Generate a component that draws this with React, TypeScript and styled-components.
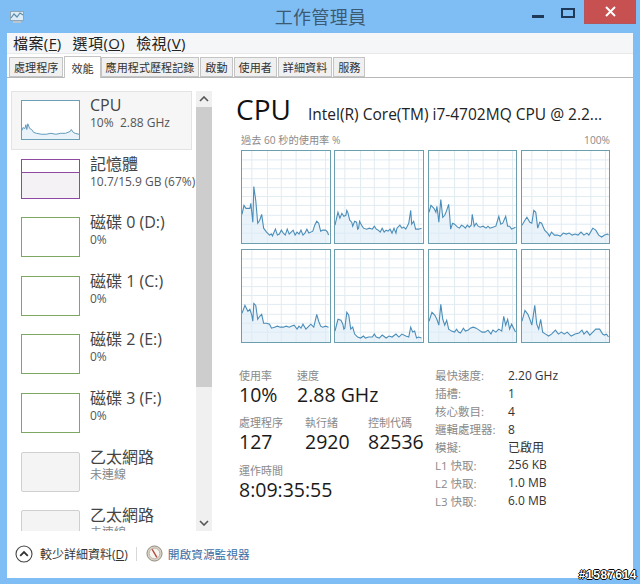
import React from 'react'
import styled, { createGlobalStyle } from 'styled-components'

const FONT = `"Open Sans", "Noto Sans CJK TC", sans-serif`

const cpuGraphs = [
  '0,64 2,55 4,58 6,58 8,58 9,53 11,72 12,36 14,50 16,73 18,70 20,64 22,78 25,82 28,85 30,84 31,86 34,79 36,85 38,84 40,80 42,83 44,85 46,79 48,84 50,82 52,80 54,85 56,82 58,84 60,80 62,85 64,83 66,79 68,83 70,82 72,81 74,75 76,71 78,73 80,81 82,80 85,80 87,82 88,85',
  '0,75 3,62 5,68 7,63 9,66 11,65 12,60 13,62 15,70 17,72 18,76 20,71 22,72 23,79 24,78 25,71 27,75 29,78 32,79 35,78 38,79 40,76 42,79 44,80 46,82 48,78 50,82 52,80 54,81 56,79 58,83 60,78 62,83 63,78 66,75 68,78 70,77 72,79 75,73 77,60 78,74 80,71 82,79 85,79 88,78',
  '0,62 2,55 5,58 7,62 8,56 9,63 10,72 12,49 14,67 16,65 18,60 20,54 21,65 22,79 24,73 26,74 29,77 31,78 33,75 35,76 37,78 39,75 41,77 43,75 44,64 46,76 48,73 50,76 52,77 55,76 58,78 60,76 62,78 65,77 68,76 71,66 73,74 75,73 78,66 80,76 82,76 84,79 88,77',
  '0,75 3,70 5,67 8,72 10,73 12,60 14,62 16,78 18,72 20,73 23,80 26,83 28,86 30,82 33,85 36,85 39,86 42,83 45,84 48,83 51,85 54,84 57,85 60,82 63,85 66,83 68,85 72,78 75,80 78,85 81,87 84,85 87,84 88,85',
  '0,64 3,56 6,62 8,60 10,66 11,72 12,54 14,56 16,70 18,67 20,65 22,74 25,74 28,75 30,79 33,78 36,77 39,78 42,78 45,77 48,78 50,77 53,76 56,80 58,77 60,79 62,75 65,80 68,77 70,75 73,78 76,65 78,72 80,77 82,78 85,77 88,78',
  '0,82 3,70 6,71 8,75 9,80 10,79 12,63 14,66 16,80 18,78 20,85 23,88 26,89 29,87 31,89 34,88 38,88 40,85 42,88 45,89 48,86 52,89 55,87 58,88 62,85 65,88 68,85 72,87 75,88 77,78 79,83 81,82 83,89 85,88 88,89',
  '0,72 3,63 6,66 8,70 10,76 12,55 14,70 16,76 18,71 20,80 23,82 26,83 28,80 30,83 32,84 35,79 37,82 40,81 42,79 45,78 48,79 51,81 54,83 57,83 60,81 63,85 65,81 68,83 71,80 74,82 76,67 78,76 80,70 82,80 84,75 88,83',
  '0,72 3,61 6,65 8,70 10,76 13,56 15,75 17,80 19,70 21,83 24,85 27,87 30,85 34,81 37,85 40,83 43,85 46,83 50,87 54,85 58,84 61,81 63,85 66,82 69,86 72,83 75,80 79,80 82,85 84,86 86,85 88,88',
]

const cpuThumb = '0,31 1,28 3,29 4,25 5,30 6,24 8,29 10,30 12,33 15,34 20,35 25,35 30,34 35,35 40,34 45,34 50,32 51,30 53,33 55,34 59,35'

const horizontalGrid = [9, 18, 28, 37, 46, 55, 65, 74, 83]
const verticalGrid = [10, 26, 40, 55, 70, 85]

const sideItems = [
  { name: 'CPU', sub: '10%  2.88 GHz', kind: 'cpu', selected: true },
  { name: '記憶體', sub: '10.7/15.9 GB (67%)', kind: 'memory' },
  { name: '磁碟 0 (D:)', sub: '0%', kind: 'disk' },
  { name: '磁碟 1 (C:)', sub: '0%', kind: 'disk' },
  { name: '磁碟 2 (E:)', sub: '0%', kind: 'disk' },
  { name: '磁碟 3 (F:)', sub: '0%', kind: 'disk' },
  { name: '乙太網路', sub: '未連線', kind: 'net', muted: true },
  { name: '乙太網路', sub: '未連線', kind: 'net', muted: true },
]

const specs = [
  ['最快速度:', '2.20 GHz'],
  ['插槽:', '1'],
  ['核心數目:', '4'],
  ['邏輯處理器:', '8'],
  ['模擬:', '已啟用'],
  ['L1 快取:', '256 KB'],
  ['L2 快取:', '1.0 MB'],
  ['L3 快取:', '6.0 MB'],
]

const App = () => {
  return (
    <Window>
      <GlobalStyle />
      <TitleBar>
        <AppIcon viewBox="0 0 16 16">
          <rect x="1.5" y="2.5" width="13" height="9" fill="#dcecf8" stroke="#8fa7b5" />
          <polyline points="2,9 5,5 8,8 11,4 14,6" fill="none" stroke="#5f8ea8" strokeWidth="1.2" />
          <rect x="4" y="12" width="8" height="2" fill="#b9c6cf" />
        </AppIcon>
        <Title>工作管理員</Title>
        <MinimizeButton />
        <MaximizeButton />
        <CloseButton>
          <svg width="11" height="11" viewBox="0 0 11 11">
            <path d="M1 1 L10 10 M10 1 L1 10" stroke="#fff" strokeWidth="2" />
          </svg>
        </CloseButton>
      </TitleBar>
      <Client>
        <MenuBar>
          <MenuItem>檔案(<u>F</u>)</MenuItem>
          <MenuItem>選項(<u>O</u>)</MenuItem>
          <MenuItem>檢視(<u>V</u>)</MenuItem>
        </MenuBar>
        <Tabs>
          <Tab>處理程序</Tab>
          <Tab $active>效能</Tab>
          <Tab>應用程式歷程記錄</Tab>
          <Tab>啟動</Tab>
          <Tab>使用者</Tab>
          <Tab>詳細資料</Tab>
          <Tab>服務</Tab>
        </Tabs>
        <Body>
          <SideColumn>
            <SideList>
              {sideItems.map((item, i) => (
                <SideItem key={i} $selected={item.selected}>
                  <Thumb $kind={item.kind}>
                    {item.kind === 'cpu' && (
                      <ThumbSvg viewBox="0 0 59 40" preserveAspectRatio="none">
                        <polygon points={`${cpuThumb} 59,40 0,40`} fill="#eaf3f9" />
                        <polyline points={cpuThumb} fill="none" stroke="#5b97bb" strokeWidth="1" />
                      </ThumbSvg>
                    )}
                    {item.kind === 'memory' && <MemoryFill />}
                  </Thumb>
                  <SideText>
                    <SideName>{item.name}</SideName>
                    <SideSub $muted={item.muted}>{item.sub}</SideSub>
                  </SideText>
                </SideItem>
              ))}
            </SideList>
            <ScrollBar>
              <ScrollArrow>
                <svg width="10" height="6" viewBox="0 0 10 6">
                  <path d="M1 5 L5 1 L9 5" fill="none" stroke="#555" strokeWidth="1.6" />
                </svg>
              </ScrollArrow>
              <ScrollThumb />
              <ScrollTrack />
              <ScrollArrow>
                <svg width="10" height="6" viewBox="0 0 10 6">
                  <path d="M1 1 L5 5 L9 1" fill="none" stroke="#555" strokeWidth="1.6" />
                </svg>
              </ScrollArrow>
            </ScrollBar>
          </SideColumn>
          <Main>
            <Heading>
              <HeadingTitle>CPU</HeadingTitle>
              <HeadingModel>Intel(R) Core(TM) i7-4702MQ CPU @ 2.2...</HeadingModel>
            </Heading>
            <CaptionRow>
              <span>過去 60 秒的使用率 %</span>
              <span>100%</span>
            </CaptionRow>
            <GraphGrid>
              {cpuGraphs.map((points, i) => (
                <Graph key={i} viewBox="0 0 89 93" preserveAspectRatio="none">
                  {horizontalGrid.map((y) => (
                    <line key={y} x1="0" x2="89" y1={y} y2={y} stroke="#e0ebf2" strokeWidth="1" />
                  ))}
                  {verticalGrid.map((x) => (
                    <line key={x} x1={x} x2={x} y1="0" y2="93" stroke="#e0ebf2" strokeWidth="1" />
                  ))}
                  <polygon points={`${points} 89,93 0,93`} fill="#dcebf6" fillOpacity="0.6" />
                  <polyline points={points} fill="none" stroke="#4a8db8" strokeWidth="1.1" />
                </Graph>
              ))}
            </GraphGrid>
            <Details>
              <Stats>
                <StatRow>
                  <Stat $width={58}>
                    <StatLabel>使用率</StatLabel>
                    <StatValue>10%</StatValue>
                  </Stat>
                  <Stat>
                    <StatLabel>速度</StatLabel>
                    <StatValue>2.88 GHz</StatValue>
                  </Stat>
                </StatRow>
                <StatRow>
                  <Stat $width={66}>
                    <StatLabel>處理程序</StatLabel>
                    <StatValue>127</StatValue>
                  </Stat>
                  <Stat $width={63}>
                    <StatLabel>執行緒</StatLabel>
                    <StatValue>2920</StatValue>
                  </Stat>
                  <Stat>
                    <StatLabel>控制代碼</StatLabel>
                    <StatValue>82536</StatValue>
                  </Stat>
                </StatRow>
                <StatRow>
                  <Stat>
                    <StatLabel>運作時間</StatLabel>
                    <StatValue>8:09:35:55</StatValue>
                  </Stat>
                </StatRow>
              </Stats>
              <Specs>
                {specs.map(([label, value]) => (
                  <React.Fragment key={label}>
                    <SpecLabel>{label}</SpecLabel>
                    <SpecValue>{value}</SpecValue>
                  </React.Fragment>
                ))}
              </Specs>
            </Details>
          </Main>
        </Body>
        <Footer>
          <CollapseIcon viewBox="0 0 18 18">
            <circle cx="9" cy="9" r="8" fill="#fff" stroke="#444" strokeWidth="1.1" />
            <path d="M5.2 10.8 L9 7 L12.8 10.8" fill="none" stroke="#333" strokeWidth="1.8" />
          </CollapseIcon>
          <FooterText>較少詳細資料(<u>D</u>)</FooterText>
          <FooterDivider />
          <MonitorIcon viewBox="0 0 18 18">
            <circle cx="9" cy="9" r="8" fill="#d8d2c6" stroke="#8d8677" />
            <circle cx="9" cy="9" r="5.6" fill="#f6f4ef" stroke="#a9a294" strokeWidth="0.7" />
            <path d="M6.5 4.5 L11.5 13" stroke="#b5443c" strokeWidth="1.5" />
          </MonitorIcon>
          <FooterLink>開啟資源監視器</FooterLink>
        </Footer>
      </Client>
      <Watermark>#1587614</Watermark>
    </Window>
  )
}

export default App

const GlobalStyle = createGlobalStyle`
html, body {
  margin: 0;
  padding: 0;
  background: #7fbef5;
}
* {
  box-sizing: border-box;
}
`

const Window = styled.div`
position: relative;
width: 640px;
height: 584px;
padding: 0 7px 6px;
display: flex;
flex-direction: column;
background: #7fbef5;
font-family: ${FONT};
overflow: hidden;
`

const TitleBar = styled.div`
height: 33px;
flex-shrink: 0;
display: flex;
align-items: flex-start;
margin-right: -3px;
`

const AppIcon = styled.svg`
width: 16px;
height: 16px;
margin: 9px 0 0 2px;
`

const Title = styled.div`
flex: 1;
padding: 5px 0 0 84px;
text-align: center;
font-size: 18px;
line-height: 24px;
letter-spacing: 0.3px;
color: #3d5a73;
`

const MinimizeButton = styled.div`
width: 12px;
height: 3px;
margin: 15px 17px 0 0;
background: #1f3a58;
`

const MaximizeButton = styled.div`
width: 14px;
height: 10px;
margin: 8px 9px 0 0;
border: 2px solid #1f3a58;
`

const CloseButton = styled.div`
width: 52px;
height: 24px;
display: flex;
align-items: center;
justify-content: center;
background: #c75050;
border: 1px solid #b0565c;
border-top: none;
`

const Client = styled.div`
flex: 1;
min-height: 0;
display: flex;
flex-direction: column;
background: #fff;
`

const MenuBar = styled.div`
height: 21px;
flex-shrink: 0;
display: flex;
align-items: center;
gap: 11px;
padding: 0 6px;
background: #f5f6f7;
border-bottom: 1px solid #e8e9ea;
`

const MenuItem = styled.span`
font-size: 15px;
line-height: 20px;
letter-spacing: 0.4px;
color: #222;
`

const Tabs = styled.div`
height: 24px;
flex-shrink: 0;
display: flex;
align-items: flex-end;
padding-left: 2px;
border-bottom: 1px solid #b8b8b8;
`

const Tab = styled.div<{ $active?: boolean }>`
height: ${(p) => (p.$active ? '22px' : '20px')};
padding: 0 ${(p) => (p.$active ? '6px' : '4px')};
margin-right: ${(p) => (p.$active ? '0' : '1px')};
position: relative;
top: ${(p) => (p.$active ? '1px' : '0')};
display: flex;
align-items: center;
font-size: 11.1px;
color: #333;
white-space: nowrap;
background: ${(p) => (p.$active ? '#fff' : '#f0f0f0')};
border: 1px solid #c4c4c4;
border-bottom: ${(p) => (p.$active ? 'none' : '1px solid #c4c4c4')};
`

const Body = styled.div`
height: 453px;
flex-shrink: 0;
display: flex;
padding-top: 13px;
`

const SideColumn = styled.div`
width: 205px;
height: 440px;
flex-shrink: 0;
padding-left: 4px;
display: flex;
overflow: hidden;
`

const SideList = styled.div`
width: 185px;
flex-shrink: 0;
height: 440px;
overflow: hidden;
`

const SideItem = styled.div<{ $selected?: boolean }>`
width: 181px;
height: 58.6px;
display: flex;
align-items: flex-start;
padding: 9px 0 0 10px;
background: ${(p) => (p.$selected ? '#f6f6f6' : 'transparent')};
outline: ${(p) => (p.$selected ? '1px solid #e3e3e3' : 'none')};
outline-offset: -1px;
`

const thumbBorder: Record<string, string> = {
  cpu: '#6b9fb5',
  memory: '#8e4aa0',
  disk: '#7da863',
  net: '#cfcfcf',
}

const Thumb = styled.div<{ $kind: string }>`
position: relative;
width: 59px;
height: 40px;
flex-shrink: 0;
background: ${(p) => (p.$kind === 'net' ? '#f4f4f4' : '#fff')};
border: 1px solid ${(p) => thumbBorder[p.$kind]};
border-radius: ${(p) => (p.$kind === 'net' ? '2px' : '0')};
`

const ThumbSvg = styled.svg`
display: block;
width: 100%;
height: 100%;
`

const MemoryFill = styled.div`
margin-top: 12px;
height: 26px;
background: #f5f2f6;
border-top: 1px solid #8e4aa0;
`

const SideText = styled.div`
margin-left: 10px;
white-space: nowrap;
margin-top: -5px;
`

const SideName = styled.div`
font-size: 16px;
line-height: 20px;
color: #444;
`

const SideSub = styled.div<{ $muted?: boolean }>`
font-size: 12px;
line-height: 16px;
white-space: pre;
color: ${(p) => (p.$muted ? '#888' : '#555')};
`

const ScrollBar = styled.div`
width: 16px;
flex-shrink: 0;
height: 440px;
display: flex;
flex-direction: column;
background: #f0f0f0;
`

const ScrollArrow = styled.div`
height: 16px;
flex-shrink: 0;
display: flex;
align-items: center;
justify-content: center;
`

const ScrollThumb = styled.div`
height: 280px;
flex-shrink: 0;
background: #cdcdcd;
`

const ScrollTrack = styled.div`
flex: 1;
`

const Main = styled.div`
flex: 1;
min-width: 0;
padding: 0 19px 0 24px;
`

const Heading = styled.div`
display: flex;
align-items: baseline;
height: 35px;
padding-top: 2px;
white-space: nowrap;
`

const HeadingTitle = styled.span`
font-size: 28px;
line-height: 33px;
color: #111;
width: 72px;
`

const HeadingModel = styled.span`
font-size: 15.5px;
color: #222;
`

const CaptionRow = styled.div`
display: flex;
justify-content: space-between;
padding: 6px 4px 0 5px;
height: 24px;
font-size: 10.2px;
line-height: 16px;
color: #8a8a8a;
`

const GraphGrid = styled.div`
display: grid;
grid-template-columns: repeat(4, 89.5px);
grid-auto-rows: 94px;
column-gap: 3.8px;
row-gap: 4.5px;
margin-left: 5px;
`

const Graph = styled.svg`
display: block;
width: 89.5px;
height: 94px;
background: #fff;
border: 1px solid #6b9fb0;
`

const Details = styled.div`
display: flex;
justify-content: space-between;
padding: 25px 0 0 3px;
`

const Stats = styled.div`
display: flex;
flex-direction: column;
gap: 9.5px;
`

const StatRow = styled.div`
display: flex;
`

const Stat = styled.div<{ $width?: number }>`
width: ${(p) => (p.$width ? `${p.$width}px` : 'auto')};
white-space: nowrap;
`

const StatLabel = styled.div`
font-size: 11px;
line-height: 16px;
color: #8a8a8a;
`

const StatValue = styled.div`
font-size: 19.5px;
line-height: 22px;
color: #1a1a1a;
`

const Specs = styled.div`
display: grid;
grid-template-columns: 73px 106px;
grid-auto-rows: 17.9px;
align-items: center;
margin-top: -1px;
`

const SpecLabel = styled.span`
font-size: 11.5px;
color: #8a8a8a;
white-space: nowrap;
`

const SpecValue = styled.span`
font-size: 12px;
color: #333;
white-space: nowrap;
`

const Footer = styled.div`
flex: 1;
display: flex;
align-items: center;
padding: 0 0 2px 8px;
`

const CollapseIcon = styled.svg`
width: 18px;
height: 18px;
flex-shrink: 0;
`

const FooterText = styled.span`
margin-left: 7px;
font-size: 12px;
color: #333;
white-space: nowrap;
`

const FooterDivider = styled.div`
width: 1px;
height: 14px;
margin: 0 9px 0 8px;
background: #d8d8d8;
`

const MonitorIcon = styled.svg`
width: 17px;
height: 17px;
flex-shrink: 0;
`

const FooterLink = styled.span`
margin-left: 5px;
font-size: 11.7px;
color: #3b6ea5;
white-space: nowrap;
`

const Watermark = styled.div`
position: absolute;
right: 3px;
bottom: 2px;
font-family: "Liberation Sans", sans-serif;
font-size: 12px;
font-weight: 700;
letter-spacing: 0.6px;
color: #fff;
text-shadow: -1px 0 #000, 1px 0 #000, 0 -1px #000, 0 1px #000;
`
